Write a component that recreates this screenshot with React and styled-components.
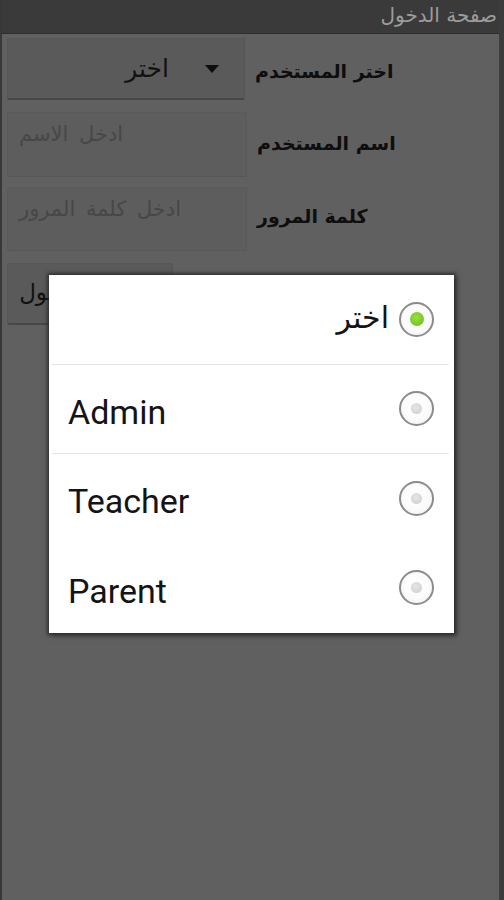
import React from "react";
import styled, { createGlobalStyle } from "styled-components";

const Global = createGlobalStyle`
  html, body { margin: 0; padding: 0; background: #606060; }
  body { width: 504px; height: 900px; overflow: hidden; font-family: "DejaVu Sans", "Noto Sans", sans-serif; }
  #root { width: 504px; height: 900px; }
`;

const Screen = styled.div`
  position: relative;
  width: 504px;
  height: 900px;
  box-sizing: border-box;
  background: #606060;
  border-left: 2px solid #383838;
  border-right: 5px solid #3c3c3c;
  display: flex;
  flex-direction: column;
`;

const TitleBar = styled.div`
  height: 34px;
  flex: none;
  background: #3a3a3a;
  border-bottom: 1px solid #2e2e2e;
  display: flex;
  justify-content: flex-start;
  align-items: flex-start;
  padding: 3px 2px 0 0;
  box-sizing: border-box;
  color: #9c9c9c;
  font-size: 20px;
  direction: rtl;
`;

const Form = styled.div`
  display: flex;
  flex-direction: column;
  padding: 4px 0 0 5px;
`;

const Row = styled.div`
  display: flex;
  align-items: center;
  gap: 10px;
  margin-bottom: ${(p) => p.$gap}px;
`;

const Field = styled.div`
  width: ${(p) => p.$w}px;
  height: ${(p) => p.$h}px;
  box-sizing: border-box;
  background: ${(p) => (p.$raised ? "#5a5a5a" : "#5d5d5d")};
  border: 1px solid ${(p) => (p.$raised ? "#565656" : "#5a5a5a")};
  border-bottom: ${(p) => (p.$raised ? "2px solid #474747" : "1px solid #575757")};
  border-radius: 2px;
  display: flex;
`;

const SpinnerBox = styled(Field)`
  align-items: center;
  justify-content: flex-end;
  padding-right: 25px;
  gap: 36px;
  color: #111;
  font-size: 25px;
`;

const Arrow = styled.span`
  width: 0;
  height: 0;
  border-left: 7px solid transparent;
  border-right: 7px solid transparent;
  border-top: 8px solid #0d0d0d;
`;

const InputBox = styled(Field)`
  align-items: flex-start;
  padding: 9px 0 0 11px;
  color: #474747;
  font-size: 21px;
  direction: ltr;
`;

const Placeholder = styled.span`
  direction: rtl;
  word-spacing: 4px;
`;

const ButtonBox = styled(Field)`
  align-items: center;
  justify-content: center;
  color: #111;
  font-size: 23px;
  padding-bottom: 4px;
`;

const Label = styled.span`
  direction: rtl;
  font-size: 19px;
  font-weight: bold;
  color: #0e0e0e;
  margin-top: ${(p) => p.$up || 0}px;
`;

const Dialog = styled.div`
  position: absolute;
  left: 47px;
  top: 275px;
  width: 405px;
  height: 358px;
  background: #ffffff;
  box-shadow: 0 0 3px 2px rgba(40, 40, 40, 0.7), 2px 2px 6px rgba(0, 0, 0, 0.5);
  display: flex;
  flex-direction: column;
`;

const Option = styled.div`
  flex: 1;
  display: flex;
  align-items: center;
  gap: 10px;
  direction: ${(p) => (p.$rtl ? "rtl" : "ltr")};
  justify-content: ${(p) => (p.$rtl ? "flex-start" : "space-between")};
  border-bottom: 1px solid ${(p) => (p.$divider ? "#e4e4e4" : "transparent")};
  margin: 0 5px 0 3px;
  padding-left: 16px;
  padding-right: 15px;
`;

const OptionText = styled.span`
  font-family: ${(p) => (p.$ar ? '"DejaVu Sans", sans-serif' : 'Roboto, "Noto Sans", sans-serif')};
  font-size: ${(p) => (p.$ar ? 30 : 34)}px;
  color: #141414;
  padding-top: ${(p) => (p.$ar ? 0 : 6)}px;
  padding-bottom: ${(p) => (p.$ar ? 4 : 0)}px;
`;

const Radio = styled.span`
  width: 35px;
  height: 35px;
  box-sizing: border-box;
  border-radius: 50%;
  border: 2px solid #8c8c8c;
  background: radial-gradient(circle at 50% 45%, #ffffff 0%, #fbfbfb 55%, #ececec 100%);
  display: flex;
  align-items: center;
  justify-content: center;
  flex: none;
`;

const Dot = styled.span`
  width: ${(p) => (p.$on ? 14 : 11)}px;
  height: ${(p) => (p.$on ? 14 : 11)}px;
  border-radius: 50%;
  background: ${(p) =>
    p.$on
      ? "radial-gradient(circle at 45% 40%, #9be03e 0%, #7cc92a 60%, #6ab520 100%)"
      : "radial-gradient(circle at 45% 40%, #e6e6e6 0%, #d4d4d4 70%, #c8c8c8 100%)"};
`;

const options = [
  { label: "اختر", ar: true, on: true, divider: true },
  { label: "Admin", divider: true },
  { label: "Teacher" },
  { label: "Parent" },
];

export default function App() {
  return (
    <>
      <Global />
      <Screen>
        <TitleBar>صفحة الدخول</TitleBar>
        <Form>
          <Row $gap={12}>
            <SpinnerBox $w={238} $h={62} $raised>
              <span>اختر</span>
              <Arrow />
            </SpinnerBox>
            <Label $up={4}>اختر المستخدم</Label>
          </Row>
          <Row $gap={10}>
            <InputBox $w={240} $h={65}>
              <Placeholder>ادخل الاسم</Placeholder>
            </InputBox>
            <Label $up={-3}>اسم المستخدم</Label>
          </Row>
          <Row $gap={12}>
            <InputBox $w={240} $h={64}>
              <Placeholder>ادخل كلمة المرور</Placeholder>
            </InputBox>
            <Label $up={-6}>كلمة المرور</Label>
          </Row>
          <Row $gap={0}>
            <ButtonBox $w={166} $h={62} $raised>
              <span dir="rtl">تسجيل الدخول</span>
            </ButtonBox>
          </Row>
        </Form>
        <Dialog>
          {options.map((o) => (
            <Option key={o.label} $rtl={o.ar} $divider={o.divider}>
              {o.ar ? (
                <>
                  <Radio>
                    <Dot $on={o.on} />
                  </Radio>
                  <OptionText $ar>{o.label}</OptionText>
                </>
              ) : (
                <>
                  <OptionText>{o.label}</OptionText>
                  <Radio>
                    <Dot $on={o.on} />
                  </Radio>
                </>
              )}
            </Option>
          ))}
        </Dialog>
      </Screen>
    </>
  );
}
